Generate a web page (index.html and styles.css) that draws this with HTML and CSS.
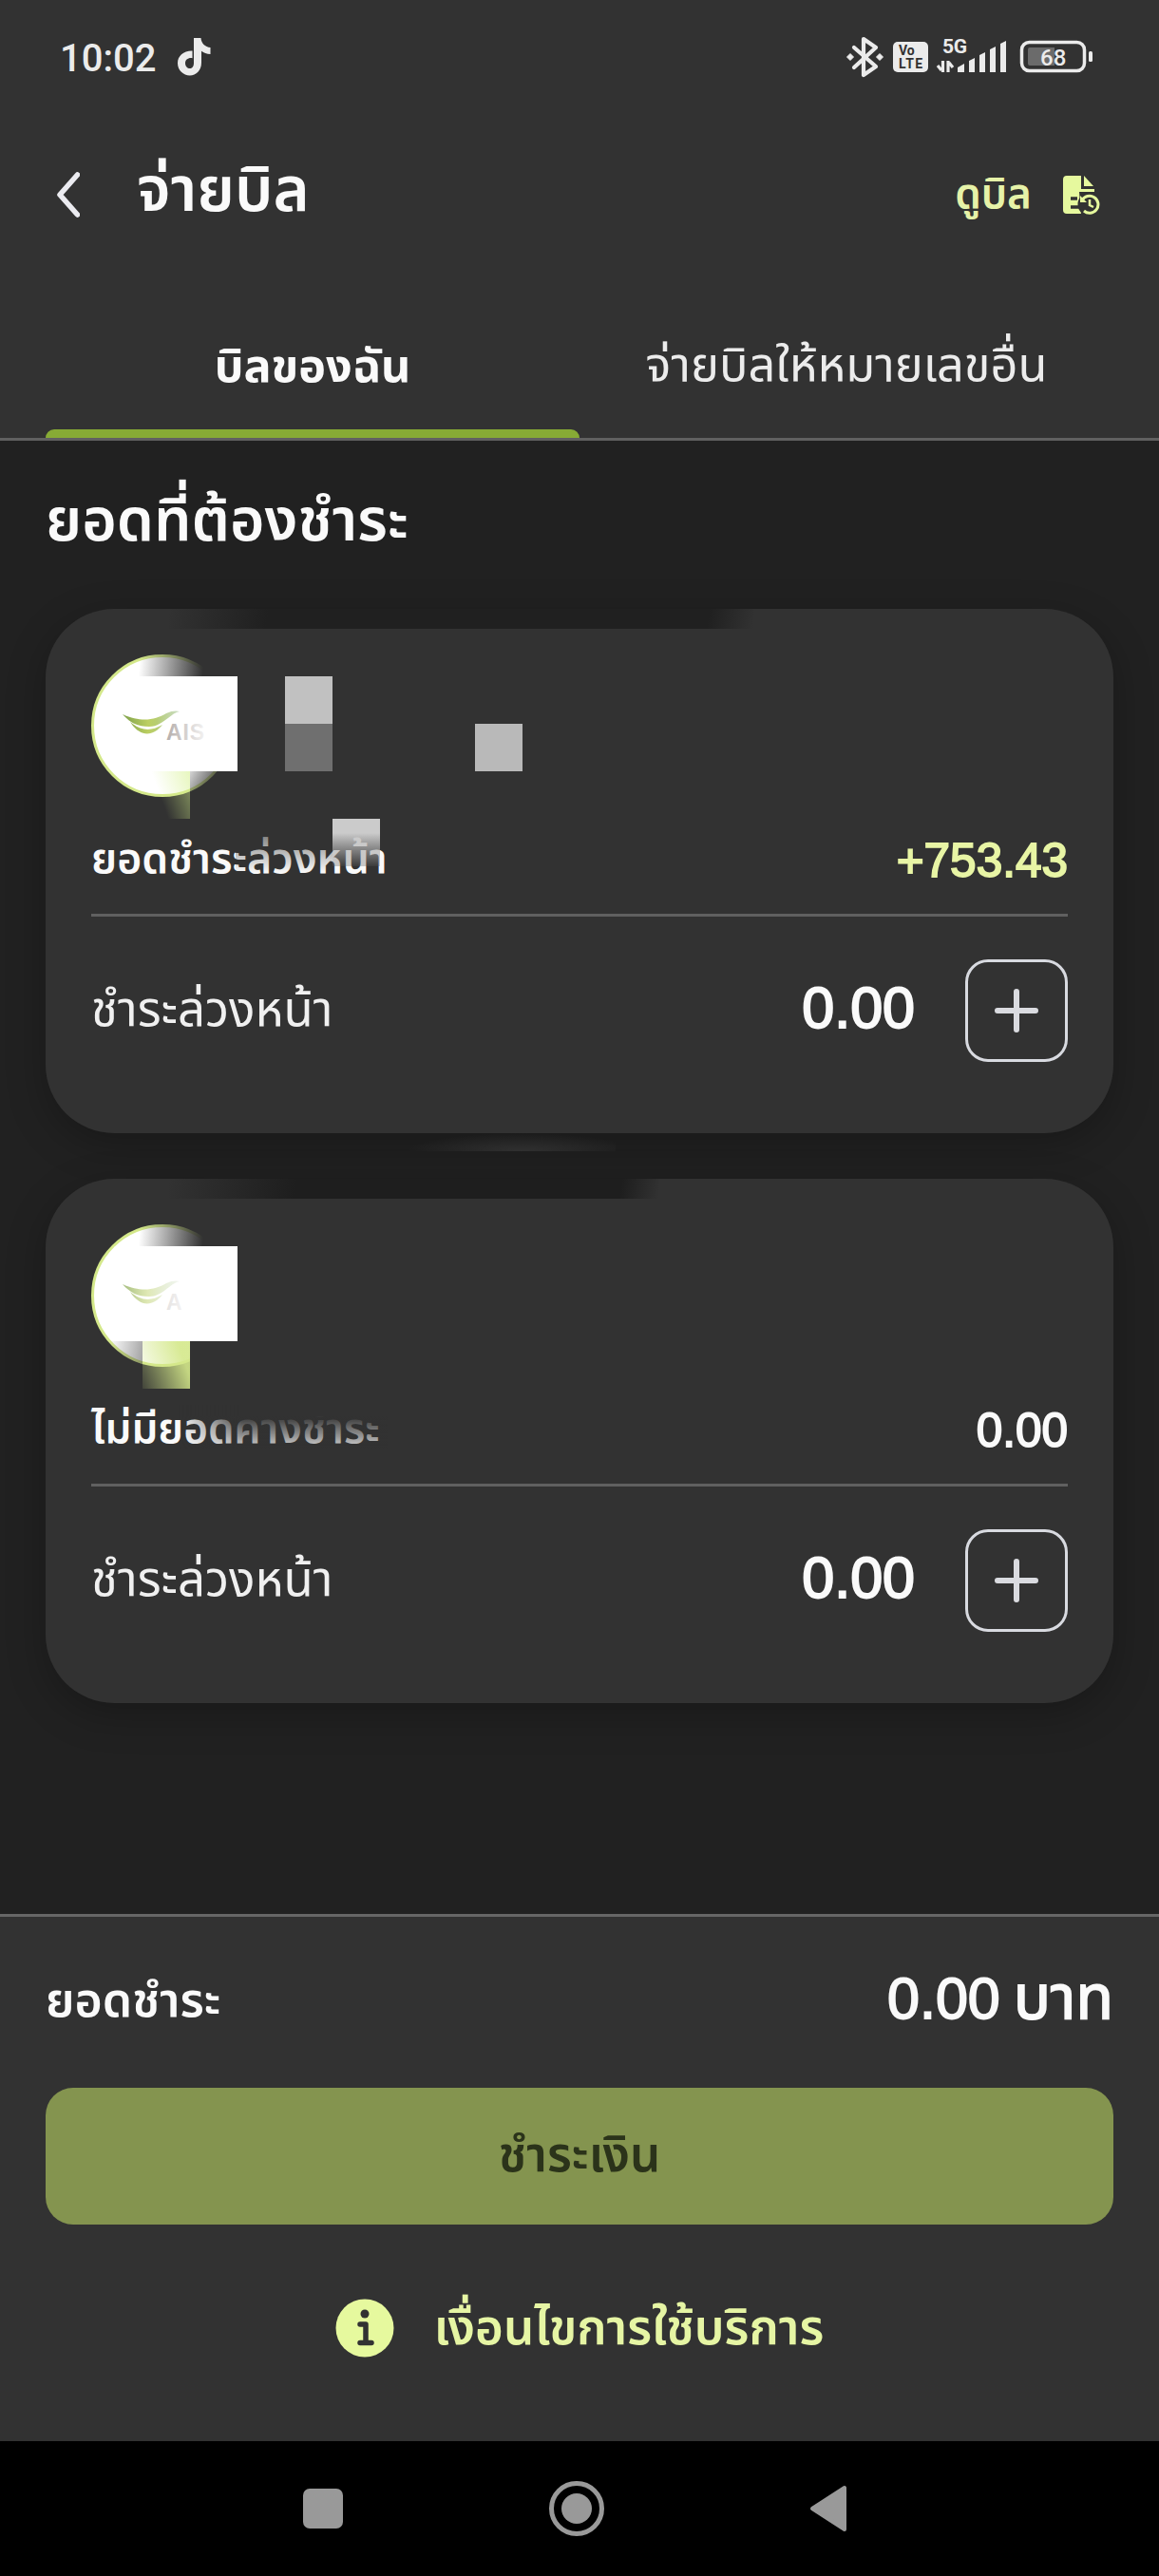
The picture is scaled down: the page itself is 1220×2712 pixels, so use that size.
FILE: index.html
```html
<!DOCTYPE html>
<html lang="th">
<head>
    <meta charset="UTF-8">
    <meta name="viewport" content="width=device-width, initial-scale=1.0">
    <title>จ่ายบิล</title>
    <link rel="stylesheet" href="styles.css">
</head>
<body>
    <!-- Status bar -->
    <div class="statusbar">
        <span class="clock">10:02</span>
        <svg class="tiktok" width="36" height="40" viewBox="0 0 36 40">
            <path d="M17 0h7.500c.3 5.500 4.500 9.500 10 10v7c-4 0-7-1.200-9.500-3.200V26c0 8-5.500 13.500-12.200 13.500S0 34 0 26.500 6 13.300 15.500 13.500v7.700C11 20.500 8 23 8 26.500s2.300 5.500 5 5.500 4-2.500 4-6z" fill="#ebebeb"/>
        </svg>
        <div class="status-icons">
            <svg width="260" height="44" viewBox="0 0 260 44">
                <path d="M8 12L31 32L18 41V3L31 12L8 33" fill="none" stroke="#ebebeb" stroke-width="4.200" stroke-linejoin="round" stroke-linecap="round"/>
                <path d="M4 18.500l3.500 3.500-3.500 3.500-3.500-3.500zM35 18.500l3.500 3.500-3.500 3.500-3.500-3.500z" fill="#ebebeb" stroke="#ebebeb" stroke-linejoin="round"/>
                <rect x="49" y="6" width="37" height="32" rx="5" fill="#ebebeb"/>
                <text class="volte" x="55" y="20">Vo</text>
                <text class="volte" x="55" y="34" textLength="25">LTE</text>
                <text class="five-g" x="101" y="18" textLength="26">5G</text>
                <path d="M101.500 26v12M96 31l4 5M107 38V26M108 28l4 5" fill="none" stroke="#ebebeb" stroke-width="3.200"/>
                <path d="M117 33l7-4v9h-7zM129 26l6-3v15h-6zM140 20l6-3v21h-6zM151 14l6-3v27h-6zM162 8l6-3v33h-6z" fill="#ebebeb"/>
                <rect x="184.500" y="6.500" width="66" height="30" rx="8" fill="none" stroke="#ebebeb" stroke-width="3.500"/>
                <path d="M193 12h26v19h-26a2 2 0 0 1-2-2V14a2 2 0 0 1 2-2z" fill="#6b6b6b"/>
                <rect x="255" y="16" width="4" height="11" rx="1.500" fill="#ebebeb"/>
                <text class="battery" x="204" y="31">68</text>
            </svg>
        </div>
    </div>

    <!-- Header -->
    <div class="header">
        <svg class="back" width="26" height="50" viewBox="0 0 26 50">
            <path d="M23.500 4L5 25l18.500 21" fill="none" stroke="#ebebf0" stroke-width="5.600" stroke-linecap="round" stroke-linejoin="round"/>
        </svg>
        <h1 class="title">จ่ายบิล</h1>
        <a class="view-bill">ดูบิล</a>
        <svg class="bill-icon" width="40" height="42" viewBox="0 0 40 42">
            <path d="M4 1h15v14h14v26H4a4 4 0 0 1-4-4V5a4 4 0 0 1 4-4z" fill="#e6f99e"/>
            <path d="M22 1l10 11H22z" fill="#e6f99e"/>
            <path d="M17 18h18v24H19z" fill="#323232"/>
            <circle cx="28" cy="31" r="12.500" fill="#323232"/>
            <path d="M8 25h7M8 34h9" stroke="#323232" stroke-width="3.500"/>
            <path d="M20 27a9 9 0 1 1 2 11" fill="none" stroke="#e6f99e" stroke-width="3"/>
            <path d="M18 22v7h7z" fill="#e6f99e"/>
            <path d="M28 26v6l4 2" fill="none" stroke="#e6f99e" stroke-width="2.500"/>
        </svg>
    </div>

    <!-- Tabs -->
    <div class="tabs">
        <div class="tab active"><span>บิลของฉัน</span></div>
        <div class="tab"><span>จ่ายบิลให้หมายเลขอื่น</span></div>
    </div>

    <!-- Bill list -->
    <div class="content">
        <h2 class="heading">ยอดที่ต้องชำระ</h2>

        <div class="card first">
            <div class="avatar">
                <svg width="144" height="144" viewBox="0 0 144 144">
                    <defs>
                        <linearGradient id="leaf" x1="0" x2="1">
                            <stop offset="0" stop-color="#7da04a"/>
                            <stop offset=".45" stop-color="#bccf62"/>
                            <stop offset="1" stop-color="#a9c79b"/>
                        </linearGradient>
                    </defs>
                    <path d="M30 60C50 69 64 66 76 59C82 56 87 56 90 57C80 59 72 73 58 73C46 73 38 69 30 60zM38 68C50 78 60 78 72 71C62 84 48 84 38 68z" fill="url(#leaf)"/>
                    <text class="brand" x="76" y="87" textLength="40">AIS</text>
                </svg>
            </div>
            <div class="row summary">
                <span class="label">ยอดชำระล่วงหน้า</span>
                <span class="amount credit">+753.43</span>
            </div>
            <div class="row pay">
                <span class="label pay-label">ชำระล่วงหน้า</span>
                <span class="value">0.00</span>
                <button class="add"><svg width="50" height="50" viewBox="0 0 50 50"><path d="M25 5v40M5 25h40" stroke="#dadbe0" stroke-width="6" stroke-linecap="round"/></svg></button>
            </div>
            <!-- Masked account details -->
            <div class="mask smear-top"></div>
            <div class="mask fade-top"></div>
            <div class="mask fade-bottom"></div>
            <div class="mask white"></div>
            <div class="mask green"></div>
            <div class="mask g1"></div>
            <div class="mask g2"></div>
            <div class="mask g3"></div>
            <div class="mask g4"></div>
            <div class="mask fade-label"></div>
        </div>

        <div class="card second">
            <div class="avatar">
                <svg width="144" height="144" viewBox="0 0 144 144">
                    <path d="M30 60C50 69 64 66 76 59C82 56 87 56 90 57C80 59 72 73 58 73C46 73 38 69 30 60zM38 68C50 78 60 78 72 71C62 84 48 84 38 68z" fill="url(#leaf)"/>
                    <text class="brand" x="76" y="87">A</text>
                </svg>
            </div>
            <div class="row summary">
                <span class="label">ไม่มียอดค้างชำระ</span>
                <span class="amount">0.00</span>
            </div>
            <div class="row pay">
                <span class="label pay-label">ชำระล่วงหน้า</span>
                <span class="value">0.00</span>
                <button class="add"><svg width="50" height="50" viewBox="0 0 50 50"><path d="M25 5v40M5 25h40" stroke="#dadbe0" stroke-width="6" stroke-linecap="round"/></svg></button>
            </div>
            <div class="mask smear-gap"></div>
            <div class="mask smear-top"></div>
            <div class="mask fade-top"></div>
            <div class="mask fade-left"></div>
            <div class="mask fade-bottom"></div>
            <div class="mask white"></div>
            <div class="mask green"></div>
            <div class="mask fade-label"></div>
        </div>
    </div>

    <!-- Payment footer -->
    <div class="footer">
        <div class="total">
            <span>ยอดชำระ</span>
            <span class="total-value">0.00<span class="baht">บาท</span></span>
        </div>
        <button class="pay-btn">ชำระเงิน</button>
        <div class="terms">
            <svg width="62" height="62" viewBox="0 0 62 62">
                <circle cx="31" cy="31" r="30.500" fill="#e6f99e"/>
                <circle cx="31" cy="16" r="4.500" fill="#323232"/>
                <path d="M26 27h6v19M26 46.500h12" fill="none" stroke="#323232" stroke-width="5.500" stroke-linecap="round" stroke-linejoin="round"/>
            </svg>
            <span>เงื่อนไขการใช้บริการ</span>
        </div>
    </div>

    <!-- Android navigation -->
    <div class="navbar">
        <svg width="42" height="42" viewBox="0 0 42 42"><rect width="42" height="42" rx="7" fill="#999"/></svg>
        <svg width="60" height="60" viewBox="0 0 60 60"><circle cx="30" cy="30" r="26.500" fill="none" stroke="#999" stroke-width="5"/><circle cx="30" cy="30" r="16" fill="#999"/></svg>
        <svg width="40" height="50" viewBox="0 0 40 50"><path d="M37 3v44L3 25z" fill="#999" stroke="#999" stroke-width="4" stroke-linejoin="round"/></svg>
    </div>
</body>
</html>
```
FILE: styles.css
```css
* {
    box-sizing: border-box;
}
body {
    margin: 0;
    width: 1220px;
    height: 2712px;
    background-color: #212121;
    color: #fafafa;
    font-family: "Liberation Sans", "Noto Sans Thai", sans-serif;
    display: flex;
    flex-direction: column;
    overflow: hidden;
}
svg {
    display: block;
}
h1, h2 {
    margin: 0;
}
span, h1, h2, .view-bill {
    white-space: nowrap;
}
.statusbar {
    height: 120px;
    padding: 38px 69px 0 63px;
    background-color: #323232;
    display: flex;
    align-items: flex-start;
}
.clock {
    font-family: Roboto, sans-serif;
    font-weight: 500;
    font-size: 40px;
    line-height: 48px;
    width: 124px;
    color: #ebebeb;
}
.tiktok {
    margin-top: 2px;
}
.status-icons {
    margin-left: auto;
}
.volte {
    font: 700 14px Roboto, sans-serif;
    fill: #323232;
}
.five-g {
    font: 700 21px Roboto, sans-serif;
    fill: #ebebeb;
}
.battery {
    font: 500 24px Roboto, sans-serif;
    fill: #ebebeb;
}
.header {
    height: 180px;
    padding: 0 61px 0 58px;
    background-color: #323232;
    display: flex;
    align-items: flex-start;
}
.back {
    margin-top: 60px;
}
.title {
    font-size: 65px;
    line-height: 80px;
    margin: 40px 0 0 60px;
    font-weight: 600;
}
.view-bill {
    margin: 52px 33px 0 auto;
    font-size: 44px;
    line-height: 64px;
    font-weight: 600;
    color: #e6f2a8;
}
.bill-icon {
    margin-top: 64px;
}
.tabs {
    height: 164px;
    padding: 0 48px;
    background-color: #323232;
    border-bottom: 3px solid #606060;
    display: flex;
}
.tab {
    flex: 1;
    display: flex;
    justify-content: center;
    padding-top: 52px;
    font-size: 50.5px;
    line-height: 66px;
    color: #ececec;
}
.active {
    position: relative;
    font-size: 48.5px;
    font-weight: 700;
    color: #fafafa;
}
.active::after {
    content: "";
    position: absolute;
    left: 0;
    right: 0;
    bottom: 0;
    height: 9px;
    border-radius: 9px 9px 0 0;
    background-color: #87ab35;
}
.content {
    flex: 1;
    padding: 0 48px;
}
.heading {
    height: 177px;
    padding-top: 38px;
    font-size: 62.5px;
    line-height: 90px;
    font-weight: 600;
}
.card {
    position: relative;
    height: 552px;
    padding: 48px;
    margin-bottom: 48px;
    border-radius: 72px;
    background-color: #323232;
    box-shadow: 0 12px 40px rgba(0, 0, 0, 0.25);
}
.avatar {
    width: 150px;
    height: 150px;
    border: 3px solid #d4e88a;
    border-radius: 50%;
    background-color: #fff;
    overflow: hidden;
}
.brand {
    font: 700 23px "Liberation Sans", sans-serif;
    fill: #a59d9a;
}
.row {
    display: flex;
    align-items: center;
}
.summary {
    height: 126px;
    padding-top: 10px;
    justify-content: space-between;
    border-bottom: 3px solid #606060;
}
.label {
    font-size: 44.5px;
    font-weight: 600;
}
.second .label {
    font-size: 44px;
}
.label.pay-label {
    font-weight: 400;
    font-size: 51px;
    color: #f0f0f0;
}
.amount {
    font-size: 49.5px;
    -webkit-text-stroke: 1.8px currentColor;
}
.credit {
    color: #e8f5a5;
}
.pay {
    padding-top: 45px;
}
.value {
    margin-left: auto;
    margin-right: 53px;
    margin-bottom: 6px;
    font-size: 61px;
    -webkit-text-stroke: 2px currentColor;
}
.add {
    width: 108px;
    height: 108px;
    padding: 26px;
    border: 3px solid #d8dae0;
    border-radius: 24px;
    background: none;
}

/* Mask blocks over the account details */
.mask {
    position: absolute;
    width: 50px;
    height: 50px;
}
.smear-top {
    left: 130px;
    top: 0;
    width: 615px;
    height: 21px;
    background: linear-gradient(100deg, transparent, #202020 17%, #202020 92%, transparent);
}
.second .smear-top {
    width: 515px;
    background: linear-gradient(100deg, transparent, #1e1e1e 26%, #1e1e1e 92%, transparent);
}
.smear-gap {
    left: 380px;
    top: -48px;
    width: 220px;
    height: 19px;
    background: radial-gradient(ellipse at 55% 100%, #303030, transparent 70%);
}
.fade-top {
    left: 82px;
    top: 40px;
    width: 120px;
    height: 31px;
    background: linear-gradient(95deg, transparent 15%, #323232 70%);
}
.fade-bottom {
    left: 152px;
    top: 171px;
    background: linear-gradient(120deg, rgba(50, 50, 50, 0.2), #323232 55%);
}
.second .fade-bottom {
    background: #323232;
}
.fade-left {
    left: 57px;
    top: 171px;
    width: 45px;
    height: 24px;
    background: linear-gradient(100deg, transparent 20%, rgba(50, 50, 50, 0.45));
}
.white {
    left: 102px;
    top: 71px;
    width: 100px;
    height: 100px;
    background: linear-gradient(90deg, rgba(255, 255, 255, 0) 15%, #fff 73%);
}
.second .white {
    left: 72px;
    width: 130px;
    background: linear-gradient(90deg, rgba(255, 255, 255, 0.2), #fff 66%);
}
.green {
    left: 102px;
    top: 171px;
    background: linear-gradient(70deg, transparent 40%, rgba(212, 240, 138, 0.55));
}
.second .green {
    background: linear-gradient(70deg, rgba(212, 232, 138, 0.1), rgba(212, 232, 138, 0.9) 80%);
}
.g1 {
    left: 252px;
    top: 71px;
    background-color: #c1c1c1;
}
.g2 {
    left: 252px;
    top: 121px;
    background-color: #6f6f6f;
}
.g3 {
    left: 452px;
    top: 121px;
    background-color: #b9b9b9;
}
.g4 {
    left: 302px;
    top: 221px;
    background: linear-gradient(#cbcbcb 30%, rgba(80, 80, 80, 0.3));
}
.fade-label {
    left: 200px;
    top: 238px;
    width: 102px;
    height: 40px;
    background: linear-gradient(rgba(50, 50, 50, 0.6), transparent);
}
.second .fade-label {
    left: 140px;
    width: 220px;
    height: 46px;
    background: linear-gradient(#323232 25%, rgba(50, 50, 50, 0.2));
    -webkit-mask-image: linear-gradient(90deg, transparent, #000 30%);
    mask-image: linear-gradient(90deg, transparent, #000 30%);
}

.footer {
    height: 555px;
    padding: 0 48px;
    background-color: #323232;
    border-top: 3px solid #666;
}
.total {
    height: 180px;
    display: flex;
    justify-content: space-between;
    align-items: center;
    font-size: 50px;
    font-weight: 600;
}
.total-value {
    font-size: 61px;
    font-weight: 400;
    margin-bottom: 6px;
    -webkit-text-stroke: 1.8px currentColor;
}
.baht {
    margin-left: 14px;
    font-size: 65px;
}
.pay-btn {
    width: 100%;
    height: 144px;
    border: none;
    border-radius: 29px;
    background-color: #84944f;
    color: #2b331a;
    font-family: inherit;
    font-size: 51px;
    font-weight: 600;
}
.terms {
    margin-top: 78px;
    height: 62px;
    display: flex;
    justify-content: center;
    align-items: center;
    gap: 42px;
    font-size: 51px;
    line-height: 62px;
    font-weight: 600;
    color: #e6f5a4;
}
.navbar {
    height: 142px;
    padding: 0 328px 0 319px;
    background-color: #000;
    display: flex;
    align-items: center;
    justify-content: space-between;
}
```
